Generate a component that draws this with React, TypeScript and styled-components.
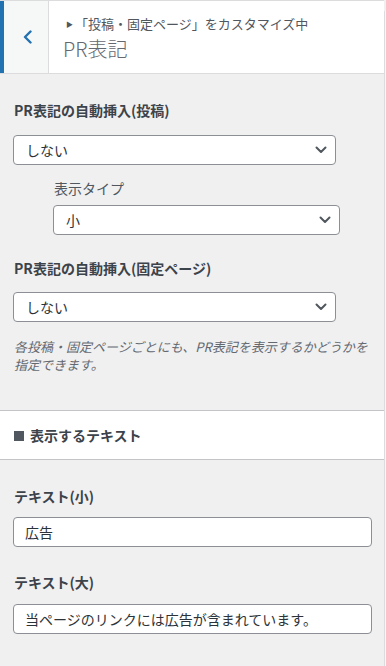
import React from "react";
import styled, { createGlobalStyle } from "styled-components";

const GlobalStyle = createGlobalStyle`
  html, body {
    margin: 0;
    padding: 0;
    background: #f0f0f1;
  }
  body {
    font-family: "Noto Sans CJK JP", "Noto Sans", sans-serif;
    color: #2c3338;
  }
  * { box-sizing: border-box; }
`;

const Frame = styled.div`
  display: flex;
  width: 386px;
  min-height: 666px;
  background: #f0f0f1;
`;

const Panel = styled.div`
  width: 384px;
  display: flex;
  flex-direction: column;
`;

const ScrollStrip = styled.div`
  width: 2px;
  margin-top: 11px;
  border-left: 1px solid #dcdcde;
  background: #f6f7f7;
`;

const Header = styled.header`
  display: flex;
  height: 74px;
  background: #fff;
  border-top: 1px solid #dcdcde;
  border-bottom: 1px solid #dcdcde;
`;

const BackButton = styled.button`
  width: 49px;
  flex: none;
  display: flex;
  align-items: center;
  justify-content: center;
  padding: 0 0 0 4px;
  margin: 0;
  background: #f6f7f7;
  border: none;
  border-left: 4px solid #2271b1;
  border-right: 1px solid #dcdcde;
  color: #2271b1;
`;

const HeaderText = styled.div`
  display: flex;
  flex-direction: column;
  justify-content: center;
  padding: 3px 0 0 14px;
  gap: 3px;
`;

const Crumb = styled.div`
  font-size: 13px;
  line-height: 18px;
  color: #50575e;
  display: flex;
  align-items: center;
`;

const Tri = styled.span`
  font-size: 7px;
  margin: 0 2px 0 3px;
  color: #50575e;
`;

const Title = styled.div`
  font-size: 20px;
  line-height: 26px;
  font-weight: 300;
  color: #646970;
`;

const Body = styled.div`
  display: flex;
  flex-direction: column;
  padding: 26px 0 0 0;
`;

const Control = styled.div<{ $indent?: boolean; $gap: number; $mb: number }>`
  display: flex;
  flex-direction: column;
  gap: ${(p) => p.$gap}px;
  padding-left: ${(p) => (p.$indent ? 53 : 13)}px;
  margin-bottom: ${(p) => p.$mb}px;
`;

const Label = styled.div<{ $light?: boolean }>`
  font-size: 14px;
  line-height: 20px;
  font-weight: ${(p) => (p.$light ? 400 : 700)};
  color: ${(p) => (p.$light ? "#50575e" : "#3c434a")};
  padding-left: 1px;
`;

const SelectBox = styled.div<{ $w: number }>`
  width: ${(p) => p.$w}px;
  height: 30px;
  display: flex;
  align-items: center;
  justify-content: space-between;
  padding: 0 8px 0 12px;
  background: #fff;
  border: 1px solid #8c8f94;
  border-radius: 4px;
  font-size: 14px;
  color: #2c3338;
`;

const TextInput = styled.input`
  width: 359px;
  height: 30px;
  padding: 0 11px;
  background: #fff;
  border: 1px solid #8c8f94;
  border-radius: 4px;
  font-family: inherit;
  font-size: 14px;
  color: #2c3338;
  outline: none;
`;

const Description = styled.p`
  margin: 2px 0 0 0;
  padding-left: 1px;
  font-size: 13px;
  line-height: 18px;
  font-style: italic;
  color: #646970;
`;

const SectionHeader = styled.div`
  height: 50px;
  display: flex;
  align-items: center;
  padding-left: 14px;
  background: #fff;
  border-top: 1px solid #c3c4c7;
  border-bottom: 1px solid #c3c4c7;
  font-size: 14px;
  font-weight: 700;
  color: #3c434a;
  margin-bottom: 26px;
`;

const Square = styled.span`
  width: 10px;
  height: 10px;
  background: #50575e;
  margin-right: 6px;
  margin-top: 1px;
`;

const Chevron = () => (
  <svg width="12" height="8" viewBox="0 0 12 8" fill="none">
    <path d="M1.5 1.5 L6 6 L10.5 1.5" stroke="#50575e" strokeWidth="2" strokeLinecap="round" strokeLinejoin="round" />
  </svg>
);

const BackIcon = () => (
  <svg width="10" height="14" viewBox="0 0 10 14" fill="none">
    <path d="M7.5 1.5 L2 7 L7.5 12.5" stroke="#2271b1" strokeWidth="2.4" strokeLinecap="round" strokeLinejoin="round" />
  </svg>
);

const Select = ({ value, w }: { value: string; w: number }) => (
  <SelectBox $w={w}>
    <span>{value}</span>
    <Chevron />
  </SelectBox>
);

export default function App() {
  return (
    <>
      <GlobalStyle />
      <Frame>
        <Panel>
          <Header>
            <BackButton aria-label="戻る">
              <BackIcon />
            </BackButton>
            <HeaderText>
              <Crumb>
                <Tri>▶</Tri>「投稿・固定ページ」をカスタマイズ中
              </Crumb>
              <Title>PR表記</Title>
            </HeaderText>
          </Header>
          <Body>
            <Control $gap={15} $mb={13}>
              <Label>PR表記の自動挿入(投稿)</Label>
              <Select value="しない" w={323} />
            </Control>
            <Control $indent $gap={7} $mb={23}>
              <Label $light>表示タイプ</Label>
              <Select value="小" w={287} />
            </Control>
            <Control $gap={14} $mb={36}>
              <Label>PR表記の自動挿入(固定ページ)</Label>
              <Select value="しない" w={323} />
              <Description>
                各投稿・固定ページごとにも、PR表記を表示するかどうかを
                <br />
                指定できます。
              </Description>
            </Control>
            <SectionHeader>
              <Square />
              表示するテキスト
            </SectionHeader>
            <Control $gap={11} $mb={25}>
              <Label>テキスト(小)</Label>
              <TextInput readOnly value="広告" />
            </Control>
            <Control $gap={12} $mb={30}>
              <Label>テキスト(大)</Label>
              <TextInput readOnly value="当ページのリンクには広告が含まれています。" />
            </Control>
          </Body>
        </Panel>
        <ScrollStrip />
      </Frame>
    </>
  );
}
